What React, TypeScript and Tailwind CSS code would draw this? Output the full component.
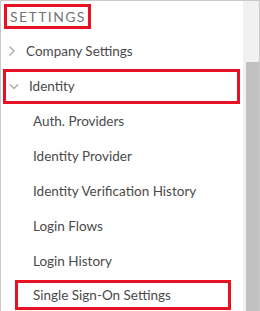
import React from "react";

const sub = [
  "Auth. Providers",
  "Identity Provider",
  "Identity Verification History",
  "Login Flows",
  "Login History",
];

export default function App() {
  return (
    <div
      className="w-[260px] h-[311px] border border-b-0 border-[#c9c9c9] flex bg-white overflow-hidden text-[#4a4a4a]"
      style={{ fontFamily: "Lato, 'Open Sans', sans-serif" }}
    >
      <div className="flex-1 flex flex-col">
        <div className="h-[32px] pt-[3px] pl-[3px]">
          <div className="inline-flex h-[25px] w-[87px] items-center border-[3px] border-[#e81123] pl-[3px] text-[14px] tracking-[1.4px] text-[#727478]">
            SETTINGS
          </div>
        </div>
        <div className="h-[36px] flex items-center pl-[7px]">
          <svg width="8" height="12" viewBox="0 0 8 12" className="mr-[10px]">
            <path d="M1.5 1.5 L6 6 L1.5 10.5" fill="none" stroke="#a8a8a8" strokeWidth="1.3" />
          </svg>
          <span className="text-[13.5px]">Company Settings</span>
        </div>
        <div className="h-[35px] ml-[2px] w-[237px] border-[3px] border-[#e81123] flex items-center pl-[3px]">
          <svg width="10" height="7" viewBox="0 0 10 7" className="mr-[10px]">
            <path d="M1 1.5 L5 5.5 L9 1.5" fill="none" stroke="#a8a8a8" strokeWidth="1.3" />
          </svg>
          <span className="text-[13.5px]">Identity</span>
        </div>
        {sub.map((s) => (
          <div key={s} className="h-[35px] flex items-center pl-[32px] text-[13.5px]">
            {s}
          </div>
        ))}
        <div className="h-[30px] mt-[1px] ml-[14px] w-[216px] border-[3px] border-[#e81123] flex items-center pl-[15px] text-[13.5px]">
          Single Sign-On Settings
        </div>
      </div>
      <div className="w-[16px] bg-[#f1f1f1] pt-[61px] flex">
        <div className="flex-1 ml-[3px] bg-[#c1c1c1]" />
      </div>
    </div>
  );
}
